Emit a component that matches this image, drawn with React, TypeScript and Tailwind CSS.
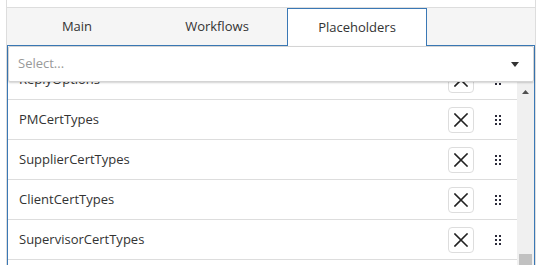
import React from 'react'

const items = ['ReplyOptions', 'PMCertTypes', 'SupplierCertTypes', 'ClientCertTypes', 'SupervisorCertTypes']

function CloseIcon() {
  return (
    <svg width="14" height="14" viewBox="0 0 14 14" fill="none">
      <path d="M1 1l12 12M13 1L1 13" stroke="#222" strokeWidth="1.6" strokeLinecap="square" />
    </svg>
  )
}

function DragHandle() {
  return (
    <svg width="6" height="10" viewBox="0 0 6 10" fill="#2b2b3a">
      <rect x="0" y="0" width="2" height="2" />
      <rect x="4" y="0" width="2" height="2" />
      <rect x="0" y="4" width="2" height="2" />
      <rect x="4" y="4" width="2" height="2" />
      <rect x="0" y="8" width="2" height="2" />
      <rect x="4" y="8" width="2" height="2" />
    </svg>
  )
}

export default function App() {
  const tabs = ['Main', 'Workflows', 'Placeholders']
  const active = 2

  return (
    <div className="w-[542px] h-[265px] bg-white overflow-hidden text-[13px] text-[#333]" style={{ fontFamily: '"Segoe UI", "Open Sans", sans-serif' }}>
      <div className="ml-[6px] w-[530px] h-full border-x border-[#ddd] pt-[7px] flex flex-col">
        {/* Tab strip */}
        <div className="flex border-t border-[#ddd] bg-[#f5f5f5]">
          {tabs.map((t, i) =>
            i === active ? (
              <div key={t} className="w-[140px] h-[38px] flex items-center justify-center bg-white border-t border-x border-[#3a78b5] text-[#333]">
                {t}
              </div>
            ) : (
              <div key={t} className="w-[140px] h-[38px] flex items-center justify-center border-b border-[#3a78b5] text-[#333]">
                {t}
              </div>
            )
          )}
          <div className="flex-1 h-[38px] border-b border-[#3a78b5]" />
        </div>

        {/* Panel */}
        <div className="flex-1 min-h-0 flex flex-col border-x border-[#3a78b5]">
          <div className="relative z-10 h-[36px] flex items-center justify-between pl-[9px] pr-[14px] bg-white border border-[#d4d4d4] rounded-[2px] shadow-[0_1px_2px_rgba(0,0,0,0.18)]">
            <span className="text-[#999]">Select...</span>
            <svg width="8" height="5" viewBox="0 0 8 5">
              <path d="M0 0h8L4 5z" fill="#333" />
            </svg>
          </div>

          <div className="flex-1 min-h-0 flex overflow-hidden">
            <div className="flex-1 overflow-hidden">
              <div className="-mt-[22px]">
                {items.map(name => (
                  <div key={name} className="h-[40px] flex items-center border-b border-[#ddd] pl-[11px] pr-[16px]">
                    <span className="flex-1 truncate">{name}</span>
                    <button className="w-[26px] h-[26px] flex items-center justify-center bg-white border border-[#ddd] rounded-[4px]">
                      <CloseIcon />
                    </button>
                    <span className="ml-[21px] flex items-center">
                      <DragHandle />
                    </span>
                  </div>
                ))}
              </div>
            </div>

            {/* Scrollbar */}
            <div className="w-[17px] bg-[#f0f0f0] flex flex-col justify-between items-center">
              <svg className="mt-[8px]" width="7" height="4" viewBox="0 0 7 4">
                <path d="M3.5 0L7 4H0z" fill="#505050" />
              </svg>
              <div className="w-[13px] h-[11px] bg-[#c1c1c1]" />
            </div>
          </div>
        </div>
      </div>
    </div>
  )
}
